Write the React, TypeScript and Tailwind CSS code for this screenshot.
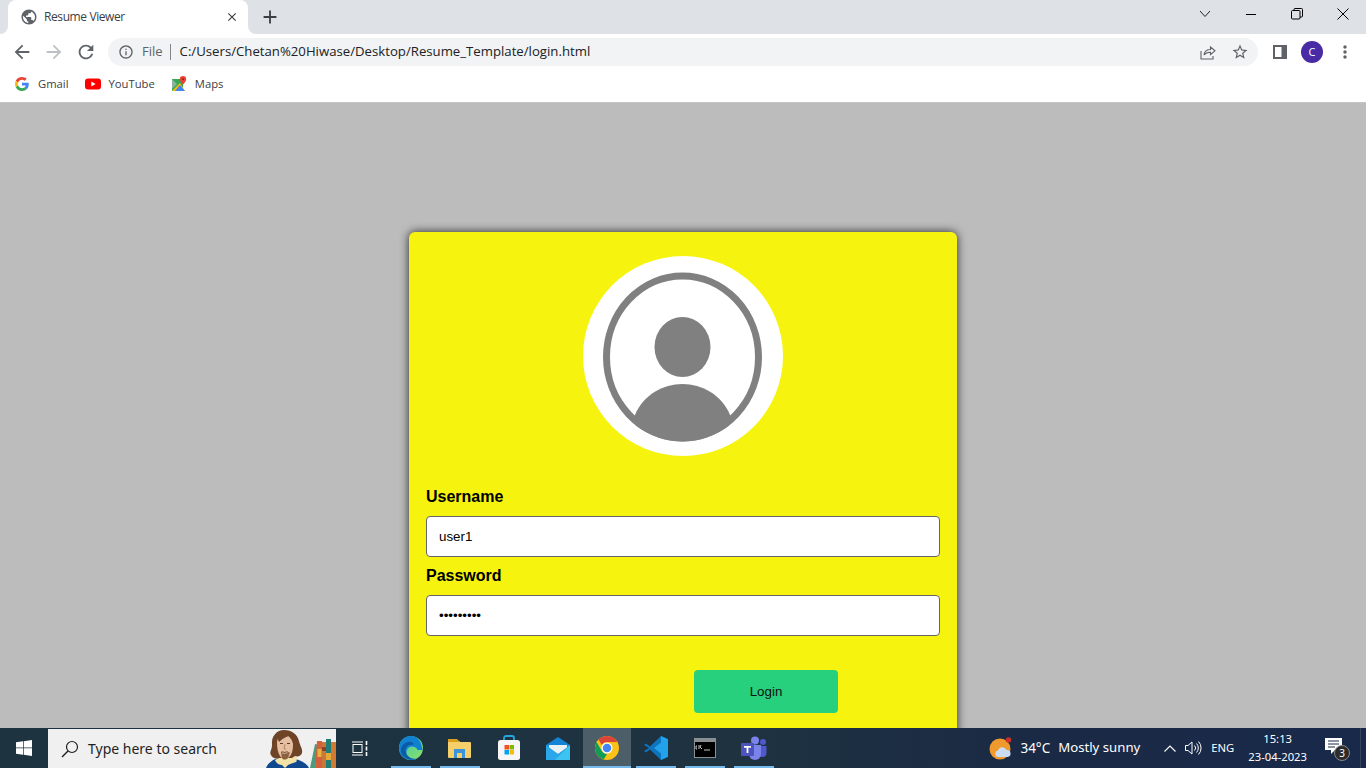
import { MdAdd, MdArrowBack, MdArrowForward, MdClose, MdInfoOutline, MdMoreVert, MdPublic, MdRefresh, MdStarBorder } from "react-icons/md";

const ui = "font-['Open_Sans','Noto_Sans',sans-serif]";

const GoogleG = () => (
  <svg width="14" height="14" viewBox="0 0 48 48">
    <path fill="#EA4335" d="M24 9.5c3.5 0 6.700 1.200 9.200 3.600l6.900-6.900C35.900 2.400 30.500 0 24 0 14.600 0 6.500 5.400 2.600 13.200l8 6.200C12.500 13.700 17.800 9.500 24 9.500z" />
    <path fill="#4285F4" d="M47 24.500c0-1.600-.1-3.100-.4-4.500H24v9h12.900c-.6 3-2.200 5.500-4.700 7.200l7.700 6C44.400 38 47 31.900 47 24.500z" />
    <path fill="#FBBC05" d="M10.600 28.600c-.5-1.400-.8-3-.8-4.600s.3-3.200.8-4.600l-8-6.200C.9 16.500 0 20.100 0 24s.9 7.500 2.600 10.800l8-6.200z" />
    <path fill="#34A853" d="M24 48c6.500 0 11.900-2.100 15.900-5.800l-7.700-6c-2.200 1.500-4.900 2.300-8.200 2.300-6.200 0-11.500-4.200-13.400-9.900l-8 6.200C6.500 42.600 14.600 48 24 48z" />
  </svg>
);

const YouTube = () => (
  <svg width="16" height="12" viewBox="0 0 16 12">
    <rect width="16" height="11" y="0.500" rx="3" fill="#ff0000" />
    <path d="M6.300 3.500v5l4.300-2.500z" fill="#fff" />
  </svg>
);

const Maps = () => (
  <svg width="16" height="16" viewBox="0 0 16 16">
    <path d="M0 3h11v12H0z" fill="#34a853" />
    <path d="M0 15 8 7l5 8z" fill="#fbbc04" />
    <path d="M0 15h13L8 9 3 15z" fill="#4285f4" />
    <path d="M0 3l5 5-5 5z" fill="#8ab4a0" />
    <path d="M11 0a3.200 3.200 0 0 1 3.200 3.200c0 2.200-3.200 5.300-3.200 5.300S7.800 5.400 7.800 3.200A3.200 3.200 0 0 1 11 0z" fill="#ea4335" />
    <circle cx="11" cy="3.200" r="1.100" fill="#a52714" />
  </svg>
);

const ShareIcon = () => (
  <svg width="16" height="16" viewBox="0 0 16 16" fill="none" stroke="#5f6368" strokeWidth="1.100">
    <path d="M1 7v8h12v-3" />
    <path d="M4 11c.5-3.500 3-5.500 6.500-5.500V3L15 6.800l-4.500 3.700V8.200C8 8.100 5.500 9 4 11z" />
  </svg>
);

const SidePanel = () => (
  <svg width="14" height="14" viewBox="0 0 14 14">
    <path d="M0 0h14v14H0z" fill="#5f6368" />
    <path d="M2 2h6.500v10H2z" fill="#fff" />
  </svg>
);

const WinLogo = () => (
  <svg width="16" height="16" viewBox="0 0 16 16" fill="#fff">
    <path d="M0 2.300 7 1.300v6.300H0zM7.700 1.200 16 0v7.600H7.700zM0 8.300h7v6.400l-7-1zM7.700 8.300H16V16l-8.300-1.200z" />
  </svg>
);

const SearchGlass = () => (
  <svg width="18" height="18" viewBox="0 0 18 18" fill="none" stroke="#1f1f1f" strokeWidth="1.200">
    <circle cx="11" cy="7" r="5.500" />
    <path d="M7 11 1 17" strokeWidth="1.500" />
  </svg>
);

const Mascot = () => (
  <svg width="44" height="39" viewBox="0 0 44 39">
    <path d="M0 39c2-5 7-9 13-10h11c8 1 16 4 19 10z" fill="#10498f" />
    <path d="M9 31c3-2 7-3 9-3l12-1c1 2 1 5 0 6-3 1-6 2-8 3l-3 3-3-3c-3 0-6-2-7-5z" fill="#f3e3a6" />
    <path d="M6 16C5 7 11 1 18 1c8 0 13 4 15 11 1 5 4 8 3 12-1 3-4 4-7 3l-3 2H13c-3 1-7 0-8-3-2-3 1-5 1-10z" fill="#6f4326" />
    <path d="M11 14c0-5 3-8 7-8 5 0 8 4 9 9 0 6-1 11-5 14-3 2-6 1-8-2-2-3-3-8-3-13z" fill="#e6bfa3" />
    <path d="M15 24c2 1 6 1 9-1l-2 6c-2 2-5 2-6 0z" fill="#8a6240" />
    <path d="M15 23.500c1.500-1 2.500-.5 3.500 0 1-.5 2.500-1 4 0" stroke="#5b3a20" strokeWidth="1" fill="none" />
    <path d="M14 14.500h3M21 14.500h3" stroke="#5b3a20" strokeWidth="1" />
    <path d="M19 15l-1 5h2" stroke="#b9866a" strokeWidth="1" fill="none" />
    <path d="M11 8c3-3 9-4 13-2-3 2-7 3-11 7z" fill="#6f4326" />
  </svg>
);

const Books = () => (
  <svg width="26" height="29" viewBox="0 0 26 29">
    <path d="M0 29 5 5l4 1-4 23z" fill="#4e9a7c" />
    <path d="M5 29 7 2h5v27z" fill="#d2603c" />
    <path d="M7.500 10h4v8h-4z" fill="#e6b33f" />
    <path d="M12 29V3h5v26z" fill="#c8793a" />
    <path d="M12 8h5v4h-5z" fill="#8f3f2a" />
    <path d="M16 29V0h5v29z" fill="#1f7f78" />
    <path d="M16 14h5v7h-5z" fill="#e5a83b" />
    <path d="M21 29V3h5v26z" fill="#d07a32" />
  </svg>
);

const TaskView = () => (
  <svg width="16" height="15" viewBox="0 0 16 15" fill="none" stroke="#fff" strokeWidth="1">
    <path d="M0 1h11M0 14h11" />
    <rect x="1" y="3.500" width="9" height="8" />
    <path d="M14.500 0v4M14.500 5.500v4M14.500 11v4" strokeWidth="1.600" />
  </svg>
);

const Edge = () => (
  <svg width="24" height="24" viewBox="0 0 24 24">
    <defs>
      <linearGradient id="edgeA" x1="0" y1="0" x2="1" y2="1">
        <stop offset="0" stopColor="#36c9a8" />
        <stop offset="1" stopColor="#8ee06b" />
      </linearGradient>
    </defs>
    <circle cx="12" cy="12" r="12" fill="url(#edgeA)" />
    <path d="M12 0C5 0 0 5 0 12c0 7 5 12 12 12 2.500 0 4-.5 6-1.500-5 1-10-1-10.500-5.500-.4-3.500 2-6.500 5.500-6.500 2.500 0 5 1.500 5.500 3.500h5C22.500 6 19 0 12 0z" fill="#1180d0" />
    <path d="M14 9c-3.500-1-7 1-7.500 4.500C6 18 10 23 16 23c-5 2-12-1-14-7C1 10 7 5 12 6c2 .4 3 1.500 2 3z" fill="#0c59a4" />
  </svg>
);

const Folder = () => (
  <svg width="24" height="20" viewBox="0 0 24 20">
    <path d="M0 1h9l2 2h1v3H0z" fill="#d9a020" />
    <path d="M0 4h22a1 1 0 0 1 1 1v14a1 1 0 0 1-1 1H1a1 1 0 0 1-1-1z" fill="#f5cf6a" />
    <path d="M6 11h11v9h-3v-5H9v5H6z" fill="#3b94d9" />
  </svg>
);

const Store = () => (
  <svg width="24" height="26" viewBox="0 0 24 26">
    <path d="M7 7V3a2 2 0 0 1 2-2h6a2 2 0 0 1 2 2v4" fill="none" stroke="#25a6e0" strokeWidth="1.800" />
    <rect x="1" y="5" width="22" height="20" rx="2.500" fill="#f6f6f6" />
    <path d="M7.500 10H12v4.500H7.500z" fill="#f25022" />
    <path d="M12.500 10H17v4.500h-4.500z" fill="#7fba00" />
    <path d="M7.500 15H12v4.500H7.500z" fill="#00a4ef" />
    <path d="M12.500 15H17v4.500h-4.500z" fill="#ffb900" />
  </svg>
);

const Mail = () => (
  <svg width="24" height="23" viewBox="0 0 24 23">
    <path d="M0 8 12 0l12 8v15H0z" fill="#1383d6" />
    <path d="M3 8h18v4l-9 5-9-5z" fill="#e8f1f8" />
    <path d="M0 8l12 9 12-9v15H0z" fill="#2ba6e8" />
    <path d="M24 8v15H9z" fill="#3cc3f2" />
  </svg>
);

const ChromeLogo = () => (
  <svg width="24" height="24" viewBox="0 0 48 48">
    <circle cx="24" cy="24" r="24" fill="#fbc116" />
    <path d="M24 0a24 24 0 0 1 20.800 12H24a12 12 0 0 0-10.400 6L6.800 7.200A24 24 0 0 1 24 0z" fill="#db4437" />
    <path d="M3.200 12 13.600 30a12 12 0 0 0 10.400 6l-6.800 11A24 24 0 0 1 3.200 12z" fill="#0f9d58" />
    <circle cx="24" cy="24" r="11" fill="#fff" />
    <circle cx="24" cy="24" r="8.500" fill="#4285f4" />
  </svg>
);

const VsCode = () => (
  <svg width="24" height="24" viewBox="0 0 24 24">
    <path d="M17 0l7 3.300v17.400L17 24 6 13.500 2 16.500 0 15l5-3-5-3 2-1.500 4 3z" fill="#0e74bd" />
    <path d="M17 0l7 3.300v17.400L17 24zM17 6.500 10 12l7 5.500z" fill="#22a2ea" />
  </svg>
);

const Cmd = () => (
  <div className="flex h-[20px] w-[22px] flex-col border border-[#8a8f92] bg-black">
    <div className="h-[3px] bg-[#8a8f92]" />
    <svg width="20" height="15" viewBox="0 0 20 15" fill="none" stroke="#c8c8c8" strokeWidth="1">
      <path d="M2 4H1v3h1M4 3v4M6 3l-1 2 2 2M9 8h6" />
    </svg>
  </div>
);

const Teams = () => (
  <svg width="26" height="24" viewBox="0 0 26 24">
    <circle cx="14" cy="4.500" r="4" fill="#7b83eb" />
    <circle cx="22" cy="6" r="3" fill="#5059c9" />
    <path d="M19 10h6.500v7a4 4 0 0 1-4 4H19z" fill="#5059c9" />
    <path d="M8 9h12v9a6 6 0 0 1-12 0z" fill="#7b83eb" />
    <rect x="0" y="7" width="13" height="13" rx="1" fill="#4b53bc" />
    <path d="M3 10h7v1.700H7.400V17H5.600v-5.300H3z" fill="#fff" />
  </svg>
);

const Weather = () => (
  <svg width="24" height="24" viewBox="0 0 24 24">
    <circle cx="11" cy="13" r="10.500" fill="#f09a2d" />
    <circle cx="19.500" cy="4" r="2.800" fill="#c9302c" />
    <path d="M9 21a3.300 3.300 0 0 1 0-6.500 4.500 4.500 0 0 1 8.500-.5 3.500 3.500 0 0 1 1 7z" fill="#c9dcf0" />
  </svg>
);

const Speaker = () => (
  <svg width="18" height="16" viewBox="0 0 18 16" fill="none" stroke="#fff" strokeWidth="1">
    <path d="M.5 5.500H3L7 2v12l-4-3.500H.5z" />
    <path d="M9.500 5.500a3.500 3.500 0 0 1 0 5M11.500 3.500a6.500 6.500 0 0 1 0 9M13.500 1.500a9.500 9.500 0 0 1 0 13" />
  </svg>
);

const Bubble = () => (
  <svg width="17" height="16" viewBox="0 0 17 16">
    <path d="M0 0h17v12h-7l-4 4v-4H0z" fill="#fff" />
    <path d="M3 3h11M3 6h11M3 9h7" stroke="#1a2b45" strokeWidth="1" />
  </svg>
);

const Bookmark = ({ icon, label, className }: { icon: React.ReactNode; label: string; className: string }) => (
  <div className={`flex items-center ${className}`}>
    {icon}
    <span className="text-[11.25px] text-[#3c4043]">{label}</span>
  </div>
);

const TaskIcon = ({ children, open, active }: { children: React.ReactNode; open?: boolean; active?: boolean }) => (
  <div className="relative flex h-[40px] w-[49px] items-center justify-center pl-px">
    {active && <div className="absolute inset-y-0 right-0 left-px bg-[#4c5e68]" />}
    <div className="relative flex items-center justify-center">{children}</div>
    {open && <div className={`absolute bottom-0 h-[2px] bg-[#76b9ed] ${active ? "right-0 left-px" : "right-[4px] left-[5px]"}`} />}
  </div>
);

function Field({ label, value, type }: { label: string; value: string; type: string }) {
  return (
    <div>
      <label className="block h-[18px] text-[16px] leading-[18px] font-bold text-black">{label}</label>
      <input
        readOnly
        type={type}
        value={value}
        className="mt-[10px] block h-[41px] w-[514px] rounded-[4px] border border-[#666] bg-white px-3 text-[13.33px] text-black outline-none"
      />
    </div>
  );
}

export default function App() {
  return (
    <div className={`flex h-[768px] w-[1366px] flex-col overflow-hidden ${ui}`}>
      {/* tab strip */}
      <div className="flex h-[34px] shrink-0 items-center bg-[#dee1e6]">
        <div className="relative ml-2 flex h-[34px] w-[240px] items-center rounded-t-lg bg-white pl-3">
          <div className="absolute bottom-0 -left-2 h-2 w-2 bg-white">
            <div className="h-2 w-2 rounded-br-lg bg-[#dee1e6]" />
          </div>
          <div className="absolute -right-2 bottom-0 h-2 w-2 bg-white">
            <div className="h-2 w-2 rounded-bl-lg bg-[#dee1e6]" />
          </div>
          <MdPublic size={18} className="text-[#5f6368]" />
          <span className="ml-[6px] text-[12px] tracking-[-0.4px] text-[#3c4043]">Resume Viewer</span>
          <MdClose size={14} className="ml-auto mr-[9px] text-[#3c4043]" />
        </div>
        <MdAdd size={22} className="ml-[11px] text-[#3c4043]" />
        <div className="ml-auto flex items-center pb-[6px]">
          <svg width="12" height="8" viewBox="0 0 12 8" fill="none" stroke="#202124" strokeWidth="1">
            <path d="M1 1l5 5.500L11 1" />
          </svg>
          <div className="ml-[35px] h-px w-[10px] bg-black" />
          <svg className="ml-[35px]" width="12" height="12" viewBox="0 0 12 12" fill="none" stroke="#000" strokeWidth="1">
            <rect x="0.500" y="2.500" width="8.500" height="8.500" rx="1" />
            <path d="M3 2.500V1.500a1 1 0 0 1 1-1h6.500a1 1 0 0 1 1 1V8a1 1 0 0 1-1 1H9" />
          </svg>
          <svg className="ml-[34px] mr-[17px]" width="12" height="12" viewBox="0 0 12 12" fill="none" stroke="#000" strokeWidth="1">
            <path d="M.5.500l11 11M11.500.500l-11 11" />
          </svg>
        </div>
      </div>

      {/* toolbar */}
      <div className="flex h-[36px] shrink-0 items-center bg-white">
        <MdArrowBack size={22} className="ml-[11px] text-[#5f6368]" />
        <MdArrowForward size={22} className="ml-[10px] text-[#bdc1c6]" />
        <MdRefresh size={22} className="ml-[10px] text-[#5f6368]" />
        <div className="ml-[11px] flex h-[28px] w-[1150px] items-center rounded-full bg-[#f1f3f4] pl-[10px]">
          <MdInfoOutline size={16} className="text-[#5f6368]" />
          <span className="ml-2 text-[13px] text-[#5f6368]">File</span>
          <div className="ml-[7px] h-4 w-px bg-[#80868b]" />
          <span className="ml-[9px] text-[13.2px] text-[#202124]">C:/Users/Chetan%20Hiwase/Desktop/Resume_Template/login.html</span>
          <div className="ml-auto flex items-center pr-[9px]">
            <ShareIcon />
            <MdStarBorder size={18} className="ml-[15px] text-[#5f6368]" />
          </div>
        </div>
        <div className="ml-[15px]"><SidePanel /></div>
        <div className="ml-[14px] flex h-[22px] w-[22px] items-center justify-center rounded-full bg-[#4a2ba6] text-[11px] text-white">C</div>
        <MdMoreVert size={20} className="ml-[12px] text-[#5f6368]" />
      </div>

      {/* bookmarks */}
      <div className="flex h-[33px] shrink-0 items-center border-b border-[#c4c4c4] bg-white pb-[4px]">
        <Bookmark className="ml-[15px] gap-[9px]" icon={<GoogleG />} label="Gmail" />
        <Bookmark className="ml-[16px] gap-2" icon={<YouTube />} label="YouTube" />
        <Bookmark className="ml-[17px] gap-[7px]" icon={<Maps />} label="Maps" />
      </div>

      {/* page */}
      <div className="flex min-h-0 flex-1 justify-center overflow-hidden bg-[#bdbcbc] pt-[129px] font-['Liberation_Sans',Arial,sans-serif]">
        <div className="h-[540px] w-[548px] shrink-0 rounded-[6px] bg-[#f6f40e] px-[17px] pt-6 shadow-[0_0_10px_rgba(0,0,0,0.8)]">
          <svg className="mx-auto block" width="200" height="200" viewBox="0 0 200 200">
            <circle cx="100" cy="100" r="100" fill="#fff" />
            <ellipse cx="99.500" cy="101" rx="76" ry="81" fill="none" stroke="#808080" strokeWidth="7" />
            <ellipse cx="99.500" cy="91" rx="28" ry="30" fill="#808080" />
            <path d="M52 159C60 139 80 128 99.500 128S139 139 147 159V168.800A79.500 84.500 0 0 1 52 168.800Z" fill="#808080" />
          </svg>
          <div className="mt-[32px] flex flex-col gap-[10px]">
            <Field label="Username" value="user1" type="text" />
            <Field label="Password" value="password1" type="password" />
          </div>
          <button className="mt-[34px] ml-[268px] block h-[43px] w-[144px] rounded-[4px] bg-[#26d07c] text-center text-[13.33px] text-[#111]">Login</button>
        </div>
      </div>

      {/* taskbar */}
      <div className="flex h-[40px] shrink-0 items-center bg-[linear-gradient(90deg,#1d3340_0%,#1e3240_55%,#1a2a45_75%,#19294a_100%)] font-['Noto_Sans','Open_Sans',sans-serif] text-white">
        <div className="flex h-[40px] w-[48px] items-center justify-center"><WinLogo /></div>
        <div className="flex h-[39px] w-[288px] items-center self-end overflow-hidden bg-[#f0f0f0] pl-[13px]">
          <SearchGlass />
          <span className="ml-[9px] text-[14px] text-[#1f1f1f]">Type here to search</span>
          <div className="mt-auto ml-auto flex items-end">
            <Mascot />
            <Books />
          </div>
        </div>
        <div className="flex">
          <div className="flex h-[40px] w-[50px] items-center justify-center pr-[3px]"><TaskView /></div>
          <TaskIcon open><Edge /></TaskIcon>
          <TaskIcon open><Folder /></TaskIcon>
          <TaskIcon><Store /></TaskIcon>
          <TaskIcon><Mail /></TaskIcon>
          <TaskIcon open active><ChromeLogo /></TaskIcon>
          <TaskIcon open><VsCode /></TaskIcon>
          <TaskIcon open><Cmd /></TaskIcon>
          <TaskIcon open><Teams /></TaskIcon>
        </div>
        <div className="ml-auto flex items-center">
          <Weather />
          <span className="ml-[7px] text-[13.5px]">34°C</span>
          <span className="ml-[8px] text-[13.2px]">Mostly sunny</span>
          <svg className="ml-[24px]" width="12" height="7" viewBox="0 0 12 7" fill="none" stroke="#fff" strokeWidth="1.100">
            <path d="M.5 6.500 6 1l5.500 5.500" />
          </svg>
          <div className="ml-[9px]"><Speaker /></div>
          <span className="ml-[8px] text-[11.25px]">ENG</span>
          <div className="ml-[14px] flex flex-col items-center text-[11.25px] leading-[18px]">
            <span>15:13</span>
            <span>23-04-2023</span>
          </div>
          <div className="relative ml-[18px] mb-1">
            <Bubble />
            <div className="absolute -right-[8px] -bottom-[7px] flex h-[16px] w-[16px] items-center justify-center rounded-full border border-[#888] bg-[#2c2c2c] text-[10px]">3</div>
          </div>
          <div className="ml-[18px] mr-[5px] h-[40px] w-px bg-[#33435c]" />
        </div>
      </div>
    </div>
  );
}
